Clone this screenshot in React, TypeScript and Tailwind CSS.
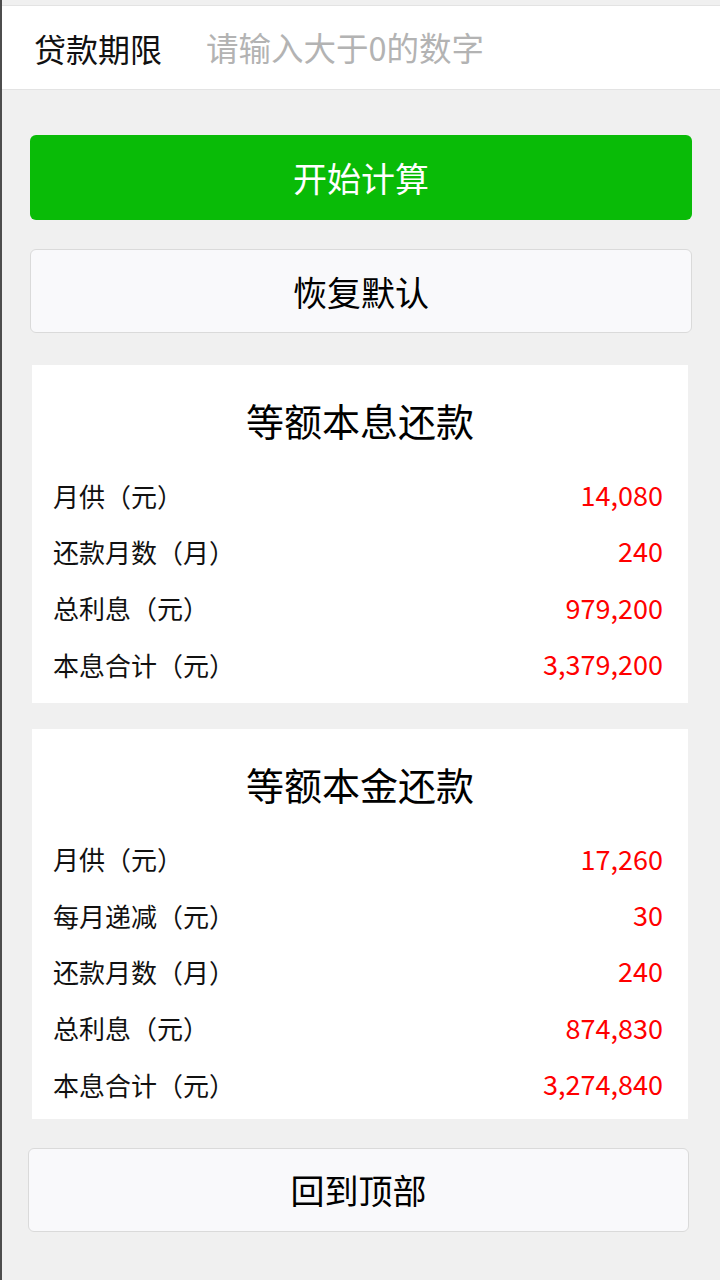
import React from "react";

const font = { fontFamily: '"Noto Sans CJK SC", "Noto Sans", sans-serif' };

type Row = { label: string; value: string };

const card1: Row[] = [
  { label: "月供（元）", value: "14,080" },
  { label: "还款月数（月）", value: "240" },
  { label: "总利息（元）", value: "979,200" },
  { label: "本息合计（元）", value: "3,379,200" },
];

const card2: Row[] = [
  { label: "月供（元）", value: "17,260" },
  { label: "每月递减（元）", value: "30" },
  { label: "还款月数（月）", value: "240" },
  { label: "总利息（元）", value: "874,830" },
  { label: "本息合计（元）", value: "3,274,840" },
];

function Card({ title, rows, className }: { title: string; rows: Row[]; className: string }) {
  return (
    <div className={"bg-white pt-[27px] " + className}>
      <div className="h-[75px] flex items-start justify-center">
        <div className="text-[38px] leading-[56px] text-black">{title}</div>
      </div>
      {rows.map((r) => (
        <div key={r.label} className="h-[56.4px] flex items-center justify-between pl-[21px] pr-[25px]">
          <span className="text-[26px] text-[#111]">{r.label}</span>
          <span className="text-[27px] text-[#ff0000]">{r.value}</span>
        </div>
      ))}
    </div>
  );
}

export default function App() {
  return (
    <div style={font} className="min-h-[1280px] bg-[#f0f0f0] border-l-2 border-[#4d4d4d] pt-[5px] pb-[48px]">
      <div className="h-[85px] bg-white border-t border-b border-[#e3e3e3] flex items-center pl-[32px]">
        <span className="w-[172px] text-[32px] text-[#111]">贷款期限</span>
        <span className="text-[32.5px] text-[#b3b3b3]">请输入大于0的数字</span>
      </div>
      <div className="mt-[45px] mx-[28px] h-[85px] rounded-[6px] bg-[#09bb07] flex items-center justify-center text-white text-[34px]">
        开始计算
      </div>
      <div className="mt-[29px] mx-[28px] h-[84px] rounded-[6px] bg-[#f9f9fb] border border-[#dadada] flex items-center justify-center text-black text-[34px]">
        恢复默认
      </div>
      <Card title="等额本息还款" rows={card1} className="mt-[32px] ml-[30px] mr-[32px] pb-[10px]" />
      <Card title="等额本金还款" rows={card2} className="mt-[26px] ml-[30px] mr-[32px] pb-[6px]" />
      <div className="mt-[29px] ml-[26px] mr-[31px] h-[84px] rounded-[6px] bg-[#f9f9fb] border border-[#dadada] flex items-center justify-center text-black text-[34px]">
        回到顶部
      </div>
    </div>
  );
}
